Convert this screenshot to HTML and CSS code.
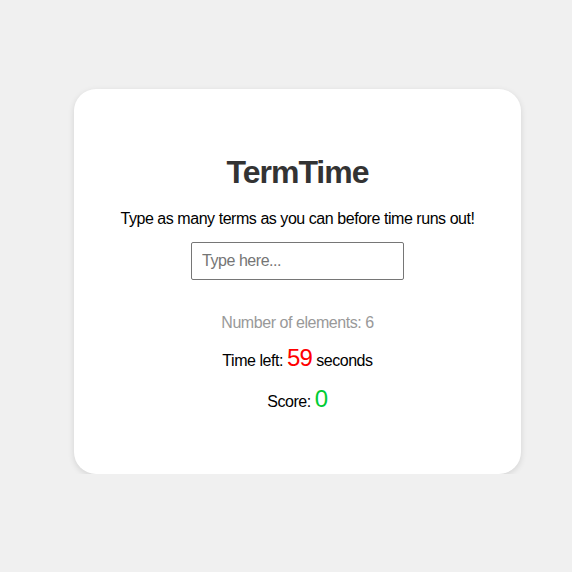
FILE: index.html
```html
<!DOCTYPE html>
<html>
<head>
<meta charset="utf-8">
<link rel="stylesheet" href="styles.css">
</head>
<body>
<div class="page">
  <div class="card">
    <h1 class="title">TermTime</h1>
    <p class="subtitle">Type as many terms as you can before time runs out!</p>
    <input class="term-input" type="text" placeholder="Type here...">
    <p class="count">Number of elements: 6</p>
    <p class="stat">Time left: <span class="time">59</span> seconds</p>
    <p class="stat score-line">Score: <span class="score">0</span></p>
  </div>
</div>
</body>
</html>
```
FILE: styles.css
```css
html, body {
  margin: 0;
  padding: 0;
  background: #f0f0f0;
  font-family: "Liberation Sans", Arial, sans-serif;
}
.page {
  padding: 89px 0 0 74px;
}
.card {
  width: 447px;
  height: 385px;
  box-sizing: border-box;
  background: #fff;
  border-radius: 22px;
  box-shadow: 0 2px 6px rgba(0,0,0,0.12);
  padding-top: 67px;
  display: flex;
  flex-direction: column;
  align-items: center;
  text-align: center;
  letter-spacing: -0.45px;
}
.title {
  margin: 0;
  font-size: 32px;
  line-height: 32px;
  font-weight: bold;
  color: #333;
  letter-spacing: -1px;
}
.subtitle {
  margin: 22px 0 0;
  font-size: 16px;
  line-height: 18px;
  color: #000;
}
.term-input {
  margin-top: 14px;
  width: 213px;
  height: 38px;
  box-sizing: border-box;
  border: 1px solid #767676;
  border-radius: 2px;
  padding: 0 10px;
  font-family: "Liberation Sans", Arial, sans-serif;
  font-size: 16px;
  letter-spacing: -0.45px;
  outline: none;
}
.term-input::placeholder {
  color: #757575;
}
.count {
  margin: 34px 0 0;
  font-size: 16px;
  line-height: 18px;
  color: #999;
}
.stat {
  margin: 12px 0 0;
  font-size: 16px;
  line-height: 28px;
  color: #000;
}
.score-line {
  margin-top: 10px;
}
.time {
  font-size: 24px;
  color: #ff0000;
  letter-spacing: -0.8px;
}
.score {
  font-size: 24px;
  color: #00cc33;
}
```
